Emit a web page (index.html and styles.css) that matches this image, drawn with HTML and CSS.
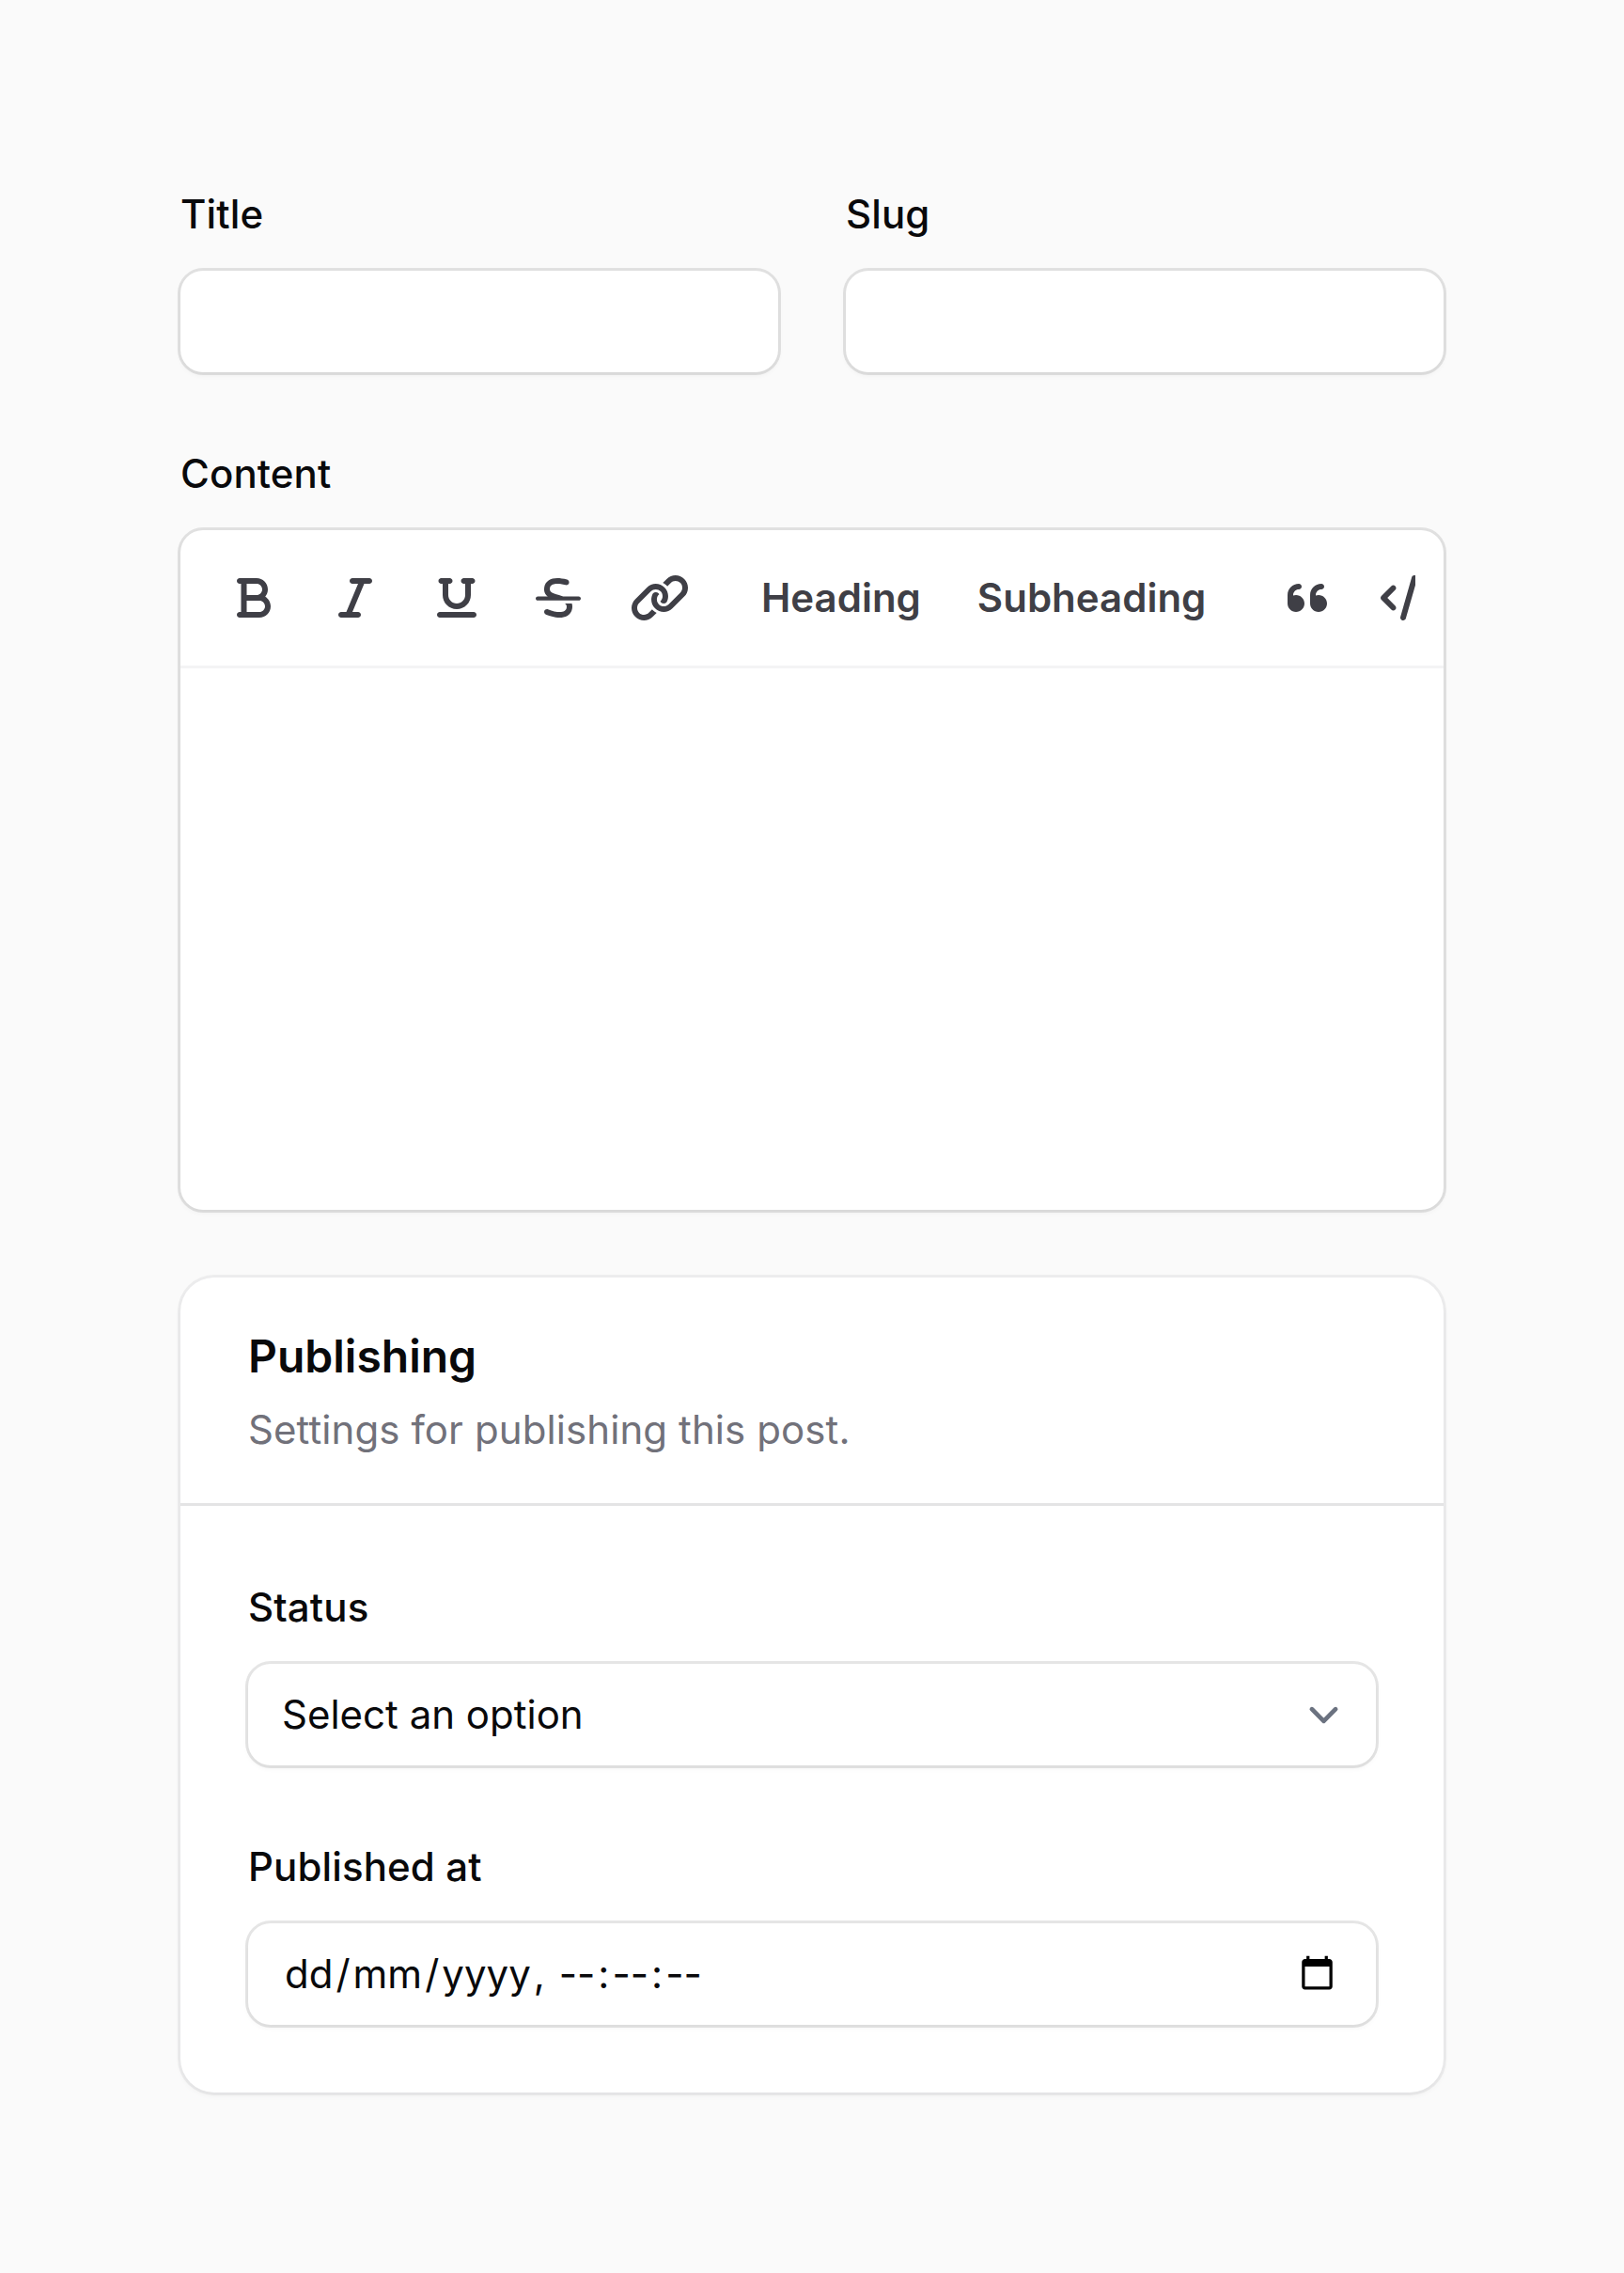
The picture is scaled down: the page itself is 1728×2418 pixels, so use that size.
FILE: index.html
```html
<!DOCTYPE html>
<html lang="en">
<head>
<meta charset="utf-8">
<title>Edit post</title>
<link rel="stylesheet" href="styles.css">
</head>
<body>
<form class="form">
  <div class="columns">
    <div class="field">
      <label class="label" for="title">Title</label>
      <input class="control" id="title" type="text">
    </div>
    <div class="field">
      <label class="label" for="slug">Slug</label>
      <input class="control" id="slug" type="text">
    </div>
  </div>

  <div class="field">
    <span class="label">Content</span>
    <div class="editor">
      <div class="toolbar">
        <div class="tools">
          <div class="group">
            <button type="button" class="tool" aria-label="Bold"><svg class="icon" viewBox="0 0 384 512"><path d="M0 64C0 46.3 14.3 32 32 32l48 0 16 0 128 0c70.7 0 128 57.3 128 128c0 31.3-11.3 60.1-30 82.3c37.1 22.4 62 63.1 62 109.7c0 70.7-57.3 128-128 128L96 480l-16 0-48 0c-17.7 0-32-14.3-32-32s14.3-32 32-32l16 0 0-160L48 96 32 96C14.3 96 0 81.7 0 64zM224 224c35.3 0 64-28.7 64-64s-28.7-64-64-64L112 96l0 128 112 0zM112 288l0 128 144 0c35.3 0 64-28.7 64-64s-28.7-64-64-64l-32 0-112 0z"/></svg></button>
            <button type="button" class="tool" aria-label="Italic"><svg class="icon" viewBox="0 0 384 512"><path d="M128 64c0-17.7 14.3-32 32-32l192 0c17.7 0 32 14.3 32 32s-14.3 32-32 32l-58.7 0L160 416l64 0c17.7 0 32 14.3 32 32s-14.3 32-32 32L32 480c-17.7 0-32-14.3-32-32s14.3-32 32-32l58.7 0L224 96l-64 0c-17.7 0-32-14.3-32-32z"/></svg></button>
            <button type="button" class="tool" aria-label="Underline"><svg class="icon" viewBox="0 0 448 512"><path d="M16 64c0-17.7 14.3-32 32-32l96 0c17.7 0 32 14.3 32 32s-14.3 32-32 32l-16 0 0 128c0 53 43 96 96 96s96-43 96-96l0-128-16 0c-17.7 0-32-14.3-32-32s14.3-32 32-32l96 0c17.7 0 32 14.3 32 32s-14.3 32-32 32l-16 0 0 128c0 88.4-71.6 160-160 160s-160-71.6-160-160L64 96 48 96C30.3 96 16 81.7 16 64zM0 448c0-17.7 14.3-32 32-32l384 0c17.7 0 32 14.3 32 32s-14.3 32-32 32L32 480c-17.7 0-32-14.3-32-32z"/></svg></button>
            <button type="button" class="tool" aria-label="Strikethrough"><svg class="icon" viewBox="0 0 512 512"><path d="M332.2 319.9c17.22 12.17 22.33 26.51 18.61 48.21c-3.031 17.59-10.88 29.34-24.72 36.99c-35.44 19.75-108.5 11.96-186-19.68c-16.34-6.686-35.03 1.156-41.72 17.53s1.188 35.05 17.53 41.71c31.75 12.93 95.69 35.37 157.6 35.37c29.62 0 58.81-5.156 83.72-18.96c30.81-17.09 50.44-45.46 56.72-82.11c3.998-23.27 2.168-42.58-3.488-59.05H332.2zM488 239.9l-176.5-.0309c-15.85-5.613-31.83-10.34-46.7-14.62c-85.47-24.62-110.9-39.05-103.7-81.33c2.5-14.53 10.16-25.96 22.72-34.03c20.47-13.15 64.06-23.84 155.4 .3438c17.09 4.531 34.59-5.654 39.13-22.74c4.531-17.09-5.656-34.59-22.75-39.12c-91.31-24.18-160.7-21.62-206.3 7.654C121.8 73.72 103.6 101.1 98.09 133.1C89.26 184.5 107.9 217.3 137.2 239.9L24 239.9c-13.25 0-24 10.75-24 23.1c0 13.25 10.75 23.1 24 23.1h464c13.25 0 24-10.75 24-23.1C512 250.7 501.3 239.9 488 239.9z"/></svg></button>
            <button type="button" class="tool" aria-label="Link"><svg class="icon" viewBox="0 0 640 512"><path d="M598.6 41.41C570.1 13.8 534.8 0 498.6 0s-72.36 13.8-99.96 41.41l-43.36 43.36c15.11 8.012 29.47 17.58 41.91 30.02c3.146 3.146 5.898 6.518 8.742 9.838l37.96-37.96C458.5 72.05 477.1 64 498.6 64c20.67 0 40.1 8.047 54.71 22.66c14.61 14.61 22.66 34.04 22.66 54.71s-8.049 40.1-22.66 54.71l-133.3 133.3C405.5 343.1 386 352 365.4 352s-40.1-8.048-54.71-22.66C296 314.7 287.1 295.3 287.1 274.6s8.047-40.1 22.66-54.71L314.2 216.4C312.5 212.1 309.9 208.5 306.7 205.3C298.1 196.7 286.8 192 274.6 192c-11.93 0-23.1 4.664-31.61 12.97c-30.71 53.96-23.63 123.6 22.39 169.6C293 402.2 329.2 416 365.4 416c36.18 0 72.36-13.8 99.96-41.41L598.6 241.3c28.45-28.45 42.24-66.01 41.37-103.3C639.1 102.1 625.4 68.16 598.6 41.41zM234 387.4L196.1 425.3C181.5 439.1 162 448 141.4 448c-20.67 0-40.1-8.047-54.71-22.66c-14.61-14.61-22.66-34.04-22.66-54.71s8.049-40.1 22.66-54.71l133.3-133.3C234.5 168 253.1 160 274.6 160s40.1 8.048 54.71 22.66c14.62 14.61 22.66 34.04 22.66 54.71s-8.047 40.1-22.66 54.71L325.8 295.6c1.694 4.289 4.277 7.891 7.514 11.13C341.9 315.3 353.2 320 365.4 320c11.93 0 23.1-4.664 31.61-12.97c30.71-53.96 23.63-123.6-22.39-169.6C346.1 109.8 310.8 96 274.6 96C238.4 96 202.3 109.8 174.7 137.4L41.41 270.7c-27.6 27.6-41.41 63.78-41.41 99.96c-.0001 36.18 13.8 72.36 41.41 99.97C69.01 498.2 105.2 512 141.4 512c36.18 0 72.36-13.8 99.96-41.41l43.36-43.36c-15.11-8.012-29.47-17.58-41.91-30.02C239.6 394.1 236.9 390.7 234 387.4z"/></svg></button>
          </div>
          <div class="group">
            <button type="button" class="tool">Heading</button>
            <button type="button" class="tool">Subheading</button>
          </div>
          <div class="group">
            <button type="button" class="tool" aria-label="Blockquote"><svg class="icon" viewBox="0 0 448 512"><path d="M96 224C84.72 224 74.05 226.3 64 229.9V224c0-35.3 28.7-64 64-64c17.67 0 32-14.33 32-32S145.7 96 128 96C57.42 96 0 153.4 0 224v96c0 53.02 42.98 96 96 96s96-42.98 96-96S149 224 96 224zM352 224c-11.28 0-21.95 2.305-32 5.879V224c0-35.3 28.7-64 64-64c17.67 0 32-14.33 32-32s-14.33-32-32-32c-70.58 0-128 57.42-128 128v96c0 53.02 42.98 96 96 96s96-42.98 96-96S405 224 352 224z"/></svg></button>
            <button type="button" class="tool" aria-label="Code block"><svg class="icon" viewBox="0 0 640 512"><path d="M414.8 40.79L286.8 488.8C281.9 505.8 264.2 515.6 247.2 510.8C230.2 505.9 220.4 488.2 225.2 471.2L353.2 23.21C358.1 6.216 375.8-3.624 392.8 1.232C409.8 6.087 419.6 23.8 414.8 40.79H414.8zM518.6 121.4L630.6 233.4C643.1 245.9 643.1 266.1 630.6 278.6L518.6 390.6C506.1 403.1 485.9 403.1 473.4 390.6C460.9 378.1 460.9 357.9 473.4 345.4L562.7 256L473.4 166.6C460.9 154.1 460.9 133.9 473.4 121.4C485.9 108.9 506.1 108.9 518.6 121.4V121.4zM166.6 166.6L77.25 256L166.6 345.4C179.1 357.9 179.1 378.1 166.6 390.6C154.1 403.1 133.9 403.1 121.4 390.6L9.372 278.6C-3.124 266.1-3.124 245.9 9.372 233.4L121.4 121.4C133.9 108.9 154.1 108.9 166.6 121.4C179.1 133.9 179.1 154.1 166.6 166.6V166.6z"/></svg></button>
          </div>
        </div>
      </div>
      <div class="editable" contenteditable="true"></div>
    </div>
  </div>

  <section class="section">
    <header class="section-header">
      <h3 class="section-title">Publishing</h3>
      <p class="section-description">Settings for publishing this post.</p>
    </header>
    <div class="section-content">
      <div class="field">
        <span class="label">Status</span>
        <div class="control select">
          <span>Select an option</span>
          <svg class="chevron" viewBox="0 0 20 20"><path d="M6 8l4 4 4-4"/></svg>
        </div>
      </div>
      <div class="field">
        <span class="label">Published at</span>
        <div class="control datetime">
          <div class="segments"><span class="segment">dd</span><span>/</span><span class="segment">mm</span><span>/</span><span class="segment">yyyy</span><span>, </span><span class="segment">--</span><span>:</span><span class="segment">--</span><span>:</span><span class="segment">--</span></div>
          <svg class="calendar" viewBox="0 0 24 24"><path d="M20 3h-1V1h-2v2H7V1H5v2H4c-1.1 0-2 .9-2 2v16c0 1.1.9 2 2 2h16c1.1 0 2-.9 2-2V5c0-1.1-.9-2-2-2zm0 18H4V8h16v13z"/></svg>
        </div>
      </div>
    </div>
  </section>
</form>
</body>
</html>
```
FILE: styles.css
```css
* {
  box-sizing: border-box;
}

body {
  margin: 0;
  background: #fafafa;
  color: #09090b;
  font-family: Inter, "Liberation Sans", sans-serif;
  font-size: 42px;
  line-height: 72px;
}

.form {
  display: flex;
  flex-direction: column;
  gap: 72px;
  padding: 192px;
}

.columns {
  display: grid;
  grid-template-columns: 1fr 1fr;
  gap: 72px;
}

.field {
  display: flex;
  flex-direction: column;
  gap: 24px;
  min-width: 0;
}

.label {
  font-weight: 500;
  letter-spacing: 0.12px;
}

.control,
.editor {
  border: 0;
  border-radius: 24px;
  background: #fff;
  box-shadow: 0 0 0 3px rgba(9, 9, 11, 0.1), 0 3px 6px rgba(0, 0, 0, 0.05);
}

.control {
  width: 100%;
  height: 108px;
  padding: 0 36px;
  font: inherit;
  outline: none;
}

.toolbar {
  padding: 24px 30px;
  border-bottom: 3px solid #f4f4f5;
}

.tools {
  display: flex;
  gap: 36px;
  overflow: hidden;
}

.group {
  display: flex;
  flex: none;
  gap: 12px;
}

.tool {
  display: flex;
  flex: none;
  align-items: center;
  justify-content: center;
  min-width: 96px;
  height: 96px;
  padding: 0 24px;
  border: 0;
  background: none;
  color: #3f3f46;
  font: 600 42px/60px Inter, "Liberation Sans", sans-serif;
}

.tool:has(.icon) {
  width: 96px;
  padding: 0;
}

.icon {
  height: 48px;
  fill: currentColor;
}

.editable {
  height: 576px;
  outline: none;
}

.section {
  border-radius: 36px;
  background: #fff;
  box-shadow: 0 0 0 3px rgba(9, 9, 11, 0.05), 0 3px 6px rgba(0, 0, 0, 0.05);
}

.section-header {
  display: flex;
  flex-direction: column;
  gap: 12px;
  padding: 48px 72px;
}

.section-title {
  margin: 0;
  font-size: 48px;
  font-weight: 600;
  line-height: 72px;
}

.section-description {
  margin: 0;
  color: #71717a;
  letter-spacing: 0.09px;
  line-height: 60px;
}

.section-content {
  display: flex;
  flex-direction: column;
  gap: 72px;
  padding: 72px;
  border-top: 3px solid #e4e4e5;
}

.select,
.datetime {
  display: flex;
  align-items: center;
  justify-content: space-between;
}

.select {
  padding-right: 24px;
}

.chevron {
  width: 63px;
  height: 63px;
  fill: none;
  stroke: #6b7280;
  stroke-width: 1.5;
  stroke-linecap: round;
  stroke-linejoin: round;
}

.segments {
  white-space: pre;
}

.segment {
  padding: 0 3px;
}

.calendar {
  width: 39px;
  height: 39px;
  margin: 0 7px 3px 0;
  fill: #000;
}
```
